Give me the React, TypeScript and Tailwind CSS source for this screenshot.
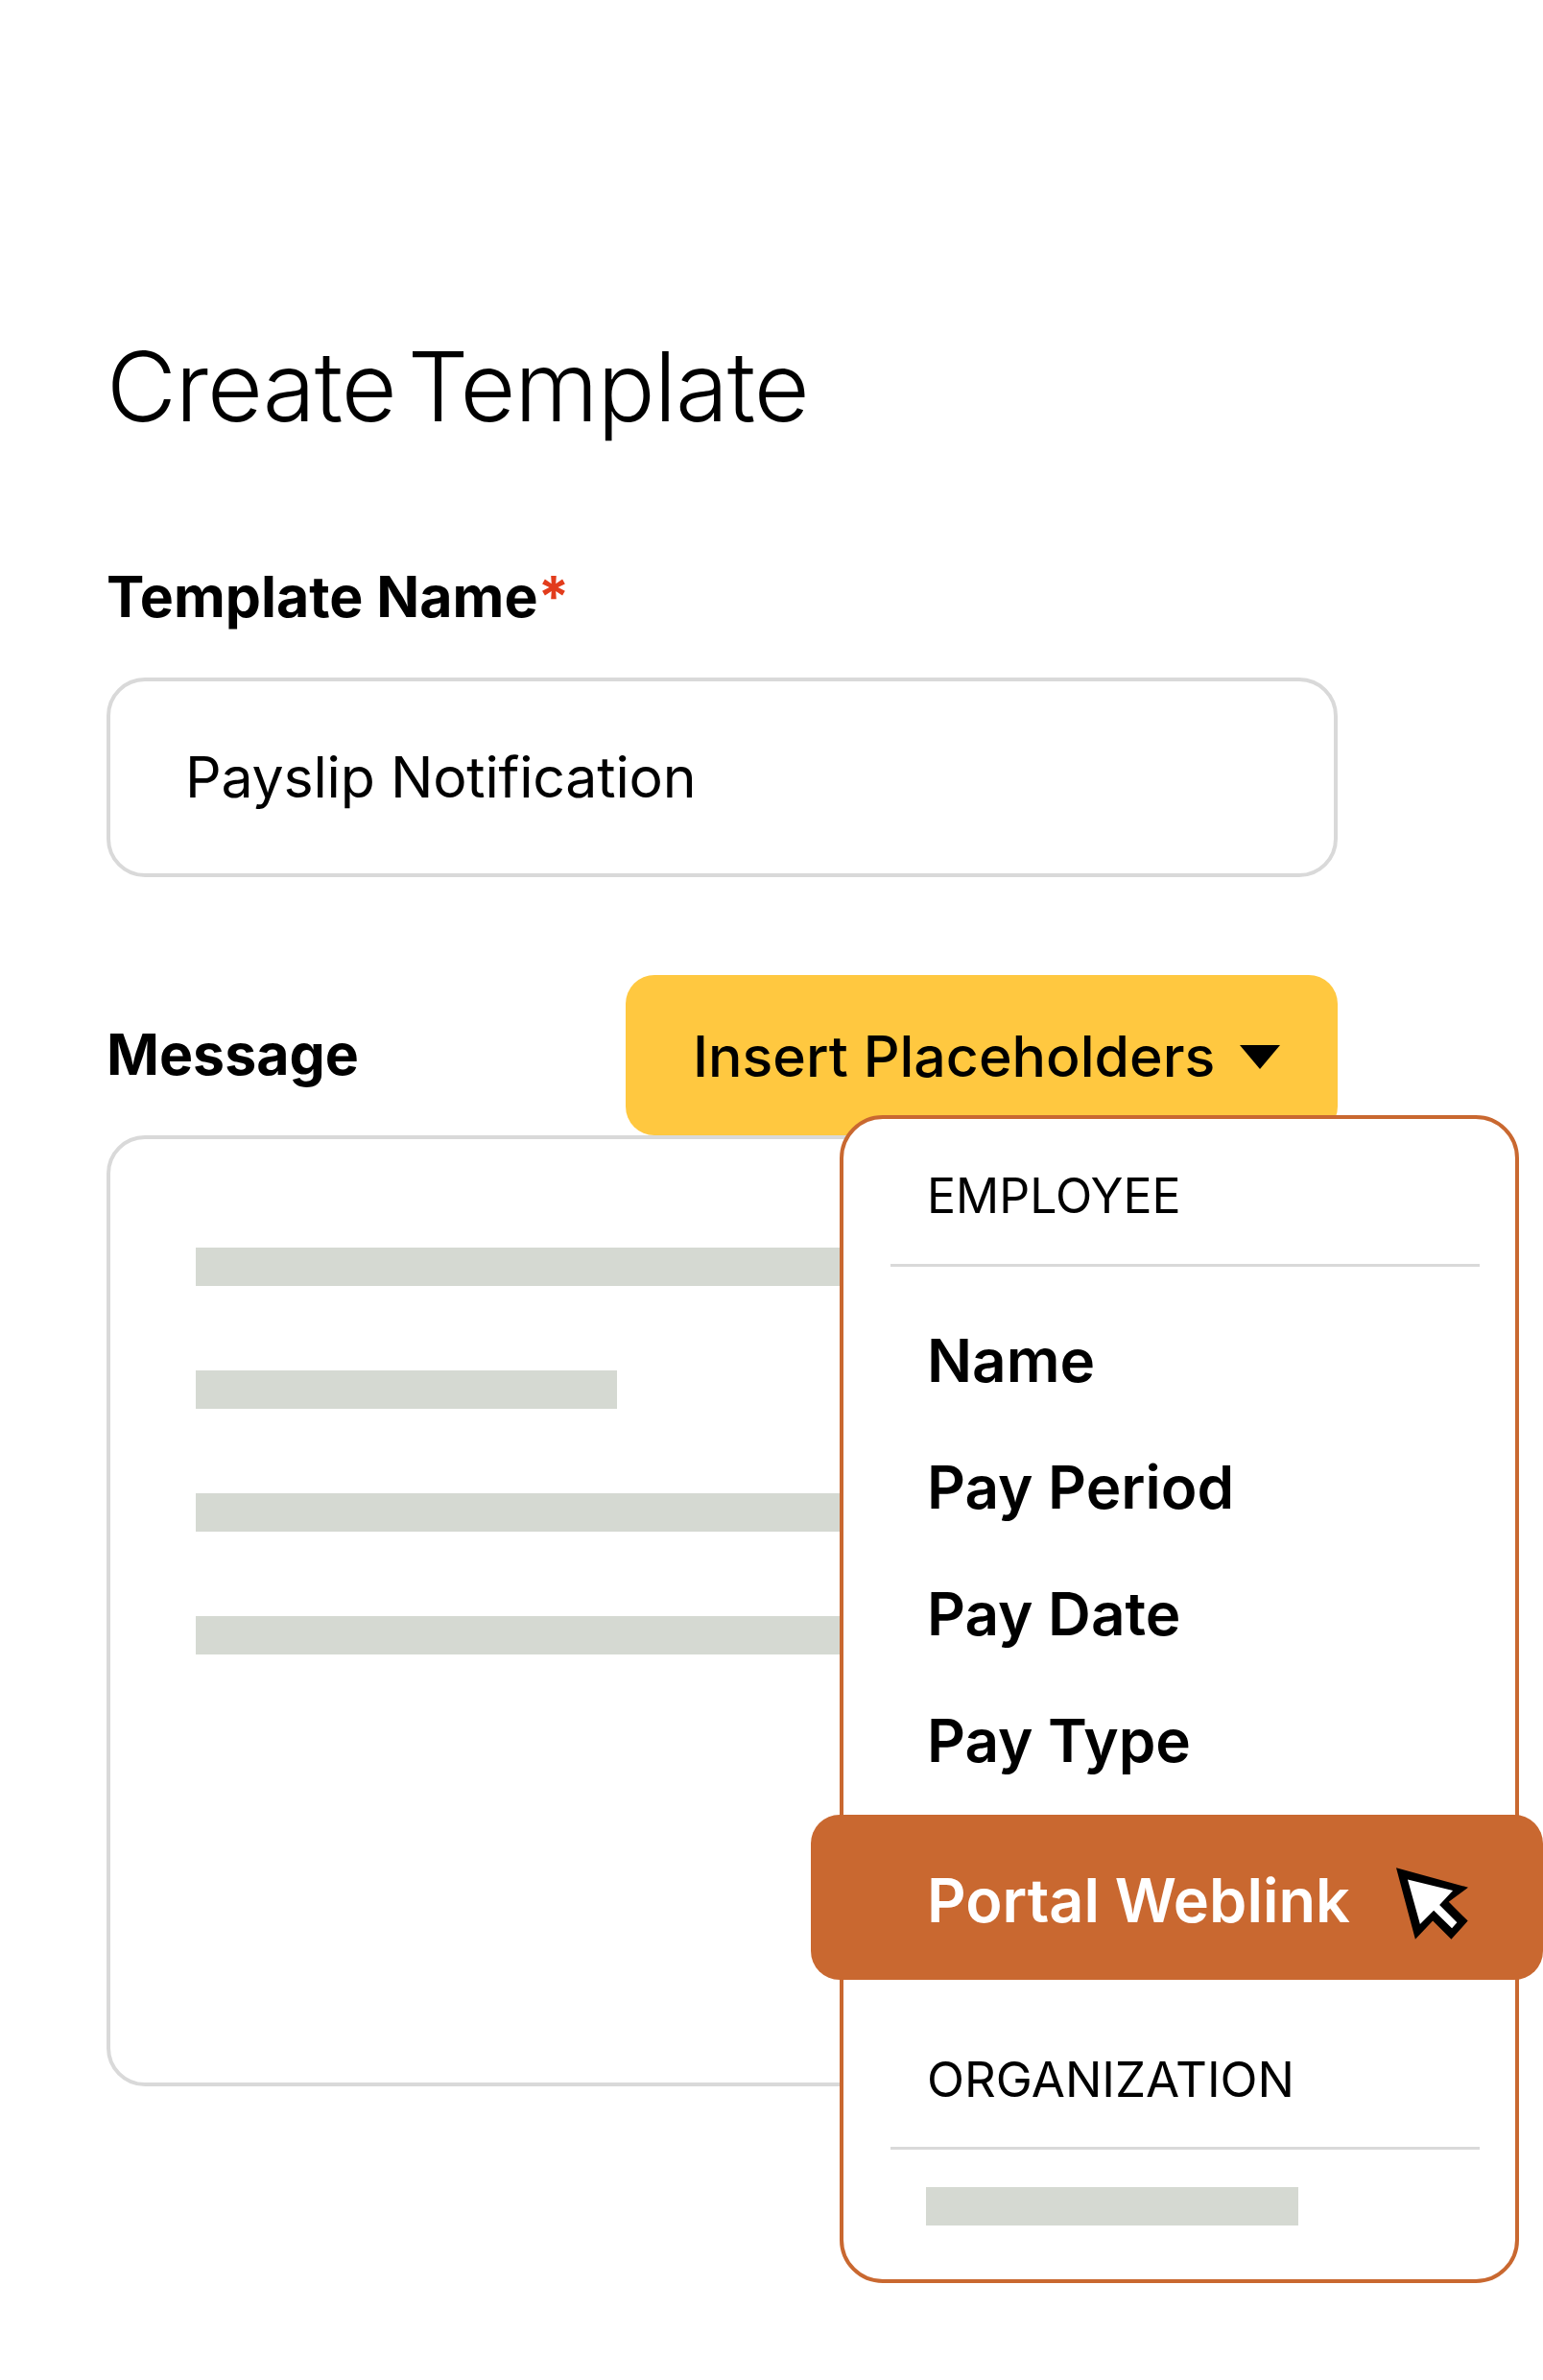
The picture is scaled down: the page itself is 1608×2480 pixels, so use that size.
import React from "react"

// grey bars standing in for message text
function Bar({ className = "" }: { className?: string }) {
  return <div className={`h-10 bg-[#d5d9d2] ${className}`} />
}

function Cursor() {
  return (
    <svg width="75" height="75" viewBox="97 73 226 225" className="mt-3 shrink-0">
      <path d="M97 73L323 135L262 180L322 240L270 298L212 240L157 298Z" fill="#000" />
      <path d="M133 110L275 145L233 190L288 245L272 263L215 207L172 250Z" fill="#fff" />
    </svg>
  )
}

function PlaceholderMenu() {
  const items = ["Name", "Pay Period", "Pay Date", "Pay Type"]
  return (
    <div className="absolute left-[875px] top-[1162px] h-[1217px] w-[708px] rounded-[45px] border-4 border-[#c96830] bg-white">
      <div className="flex h-[151px] items-end pb-[41px] pl-[87px] text-[50px] leading-[60px] text-black">EMPLOYEE</div>
      <div className="ml-[49px] mr-[37px] h-[3px] bg-[#d9d9d9]" />
      <ul className="mb-[12px] pt-[31px]">
        {items.map((item) => (
          <li key={item} className="flex h-[132px] items-center pl-[87px] text-[62px] font-semibold text-black">
            {item}
          </li>
        ))}
      </ul>
      <div className="relative -ml-[34px] -mr-[29px] flex h-[172px] items-center justify-between rounded-[30px] bg-[#c96830] pl-[121px] pr-[78px] text-[63px] font-semibold text-white">
        <span className="pt-[6px]">Portal Weblink</span>
        <Cursor />
      </div>
      <div className="flex h-[174px] items-end pb-[40px] pl-[87px] text-[51px] leading-[60px] text-black">ORGANIZATION</div>
      <div className="ml-[49px] mr-[37px] h-[3px] bg-[#d9d9d9]" />
      <div className="ml-[86px] mt-[39px] h-10 w-[388px] bg-[#d5d9d2]" />
    </div>
  )
}

export default function App() {
  return (
    <div className="relative h-[2480px] w-[1608px] overflow-hidden bg-white font-['Inter',sans-serif] text-black">
      <div className="w-[1394px] pl-[111px] pt-[340px]">
        <h1 className="text-[100px] font-light leading-[125px] tracking-[-1.05px] [word-spacing:-15px]">Create Template</h1>

        <div className="mt-[122px] text-[59px] font-bold leading-[70px]">
          Template Name<span className="text-[#e23c1c]">*</span>
        </div>
        <div className="mt-[49px] flex h-[208px] items-center rounded-[40px] border-4 border-[#d9d9d9] pl-[78px] text-[59px] tracking-[-0.2px]">
          Payslip Notification
        </div>

        <div className="mt-[102px] flex items-start justify-between">
          <div className="pt-[48px] text-[59px] font-bold leading-[70px]">Message</div>
          <div className="flex h-[167px] w-[742px] items-center gap-[26px] rounded-[30px] bg-[#ffc840] pl-[70px] pt-[4px] text-[59px] font-medium">
            Insert Placeholders
            <svg width="42" height="25" viewBox="0 0 42 25">
              <path d="M0 0H42L21 25Z" fill="#000" />
            </svg>
          </div>
        </div>

        <div className="flex h-[991px] flex-col gap-[88px] rounded-[40px] border-4 border-[#d9d9d9] pl-[89px] pt-[113px]">
          <Bar className="w-[800px]" />
          <Bar className="w-[439px]" />
          <Bar className="w-[800px]" />
          <Bar className="w-[800px]" />
        </div>
      </div>
      <PlaceholderMenu />
    </div>
  )
}
